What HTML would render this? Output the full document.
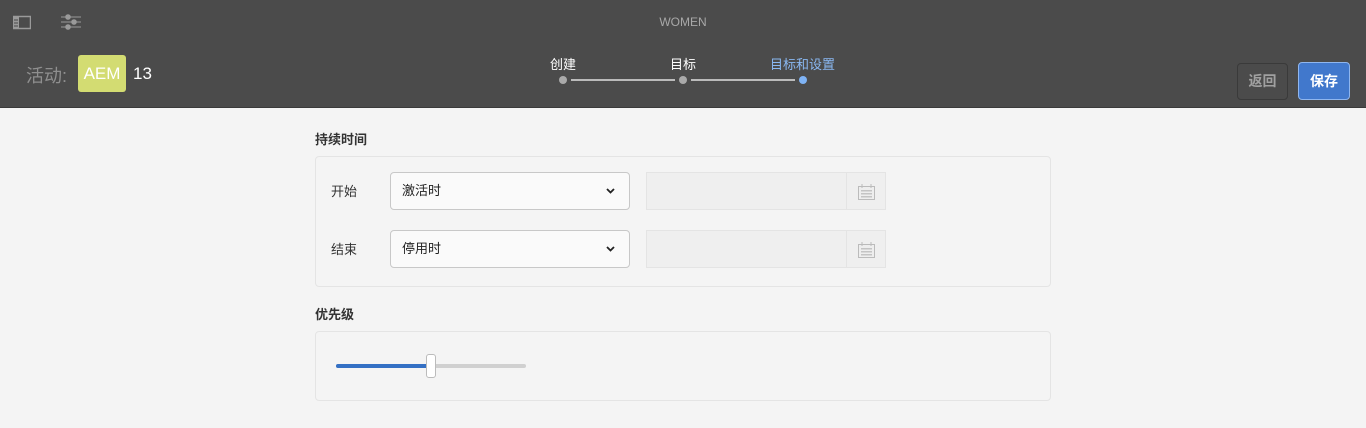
<!DOCTYPE html>
<html><head><meta charset="utf-8"><style>
*{box-sizing:border-box;margin:0;padding:0}
body{width:1366px;height:428px;background:#f4f4f4;font-family:"Liberation Sans","Noto Sans CJK SC",sans-serif;position:relative;overflow:hidden;font-size:13px;color:#333}
.hdr{position:absolute;left:0;top:0;width:1366px;height:108px;background:#4b4b4b;border-bottom:1px solid #3a3a3a}
.abs{position:absolute}
.sec{position:absolute;font-weight:bold;font-size:13px;color:#333}
.box{position:absolute;border:1px solid #e4e4e4;border-radius:4px;background:#f4f4f4}
.sel{position:absolute;width:240px;height:38px;border:1px solid #c8c8c8;border-radius:4px;background:#fafafa;padding-left:11px;line-height:36px;font-size:13px;color:#222}
.sel svg{position:absolute;right:14px;top:15px}
.inp{position:absolute;width:240px;height:38px;border:1px solid #e4e4e4;background:#efefef}
.inp .b{position:absolute;right:0;top:0;width:39px;height:36px;border-left:1px solid #e4e4e4}
</style></head><body>
<div class="hdr">
 <svg class="abs" style="left:13px;top:15px" width="18" height="15"><rect x="0.5" y="1.5" width="17" height="12" fill="none" stroke="#9a9a9a" stroke-width="1.5"/><rect x="0" y="1" width="6" height="13" fill="#9a9a9a"/><g stroke="#4b4b4b"><line x1="1" y1="5" x2="5" y2="5"/><line x1="1" y1="8" x2="5" y2="8"/><line x1="1" y1="11" x2="5" y2="11"/></g></svg>
 <svg class="abs" style="left:61px;top:14px" width="20" height="16" stroke="#9a9a9a" fill="#9a9a9a"><line x1="0" y1="3" x2="20" y2="3"/><line x1="0" y1="8" x2="20" y2="8"/><line x1="0" y1="13" x2="20" y2="13"/><circle cx="7" cy="3" r="2.3"/><circle cx="13" cy="8" r="2.3"/><circle cx="7" cy="13" r="2.3"/></svg>
 <div class="abs" style="left:0;width:1366px;top:15px;text-align:center;color:#a8a8a8;font-size:12px">WOMEN</div>
 <div class="abs" style="left:26px;top:62px;color:#8f8f8f;font-size:18px">活动:</div>
 <div class="abs" style="left:78px;top:55px;width:48px;height:37px;background:#d3dc72;border-radius:3px;color:#fff;font-size:17px;line-height:37px;text-align:center">AEM</div>
 <div class="abs" style="left:133px;top:64px;color:#fff;font-size:17px">13</div>
 <div class="abs" style="left:550px;top:54px;color:#fff;font-size:13px">创建</div>
 <div class="abs" style="left:670px;top:54px;color:#fff;font-size:13px">目标</div>
 <div class="abs" style="left:770px;top:54px;color:#8ab8f2;font-size:13px">目标和设置</div>
 <div class="abs" style="left:571px;top:79px;width:104px;height:2px;background:#bbb"></div>
 <div class="abs" style="left:691px;top:79px;width:104px;height:2px;background:#bbb"></div>
 <div class="abs" style="left:559px;top:76px;width:8px;height:8px;border-radius:50%;background:#aaa"></div>
 <div class="abs" style="left:679px;top:76px;width:8px;height:8px;border-radius:50%;background:#aaa"></div>
 <div class="abs" style="left:799px;top:76px;width:8px;height:8px;border-radius:50%;background:#7fb3f5"></div>
 <div class="abs" style="left:1237px;top:63px;width:51px;height:37px;border:1px solid #3a3a3a;border-radius:4px;color:#a0a0a0;font-weight:bold;font-size:14px;text-align:center;line-height:35px">返回</div>
 <div class="abs" style="left:1298px;top:62px;width:52px;height:38px;border:1px solid #8fb6ef;border-radius:4px;background:#4178cc;color:#fff;font-weight:bold;font-size:14px;text-align:center;line-height:36px">保存</div>
</div>
<div class="sec" style="left:315px;top:129px">持续时间</div>
<div class="box" style="left:315px;top:156px;width:736px;height:131px"></div>
<div class="abs" style="left:331px;top:181px">开始</div>
<div class="sel" style="left:390px;top:172px">激活时<svg width="9" height="6"><path d="M1 1l3.5 3.5L8 1" stroke="#222" stroke-width="1.8" fill="none"/></svg></div>
<div class="inp" style="left:646px;top:172px"><div class="b"><svg style="margin:11px 0 0 11px" width="17" height="16"><rect x="0.5" y="2.5" width="16" height="13" fill="#eee" stroke="#bbb"/><line x1="4" y1="0" x2="4" y2="4" stroke="#bbb"/><line x1="13" y1="0" x2="13" y2="4" stroke="#bbb"/><g fill="#c4c4c4"><rect x="3" y="6" width="11" height="1.5"/><rect x="3" y="9" width="11" height="1.5"/><rect x="3" y="12" width="11" height="1.5"/></g></svg></div></div>
<div class="abs" style="left:331px;top:239px">结束</div>
<div class="sel" style="left:390px;top:230px">停用时<svg width="9" height="6"><path d="M1 1l3.5 3.5L8 1" stroke="#222" stroke-width="1.8" fill="none"/></svg></div>
<div class="inp" style="left:646px;top:230px"><div class="b"><svg style="margin:11px 0 0 11px" width="17" height="16"><rect x="0.5" y="2.5" width="16" height="13" fill="#eee" stroke="#bbb"/><line x1="4" y1="0" x2="4" y2="4" stroke="#bbb"/><line x1="13" y1="0" x2="13" y2="4" stroke="#bbb"/><g fill="#c4c4c4"><rect x="3" y="6" width="11" height="1.5"/><rect x="3" y="9" width="11" height="1.5"/><rect x="3" y="12" width="11" height="1.5"/></g></svg></div></div>
<div class="sec" style="left:315px;top:304px">优先级</div>
<div class="box" style="left:315px;top:331px;width:736px;height:70px"></div>
<div class="abs" style="left:336px;top:364px;width:190px;height:4px;border-radius:2px;background:#d0d0d0"></div>
<div class="abs" style="left:336px;top:364px;width:96px;height:4px;border-radius:2px;background:#3470c4"></div>
<div class="abs" style="left:426px;top:354px;width:10px;height:24px;border:1px solid #bbb;border-radius:3px;background:#fff"></div>
</body></html>
